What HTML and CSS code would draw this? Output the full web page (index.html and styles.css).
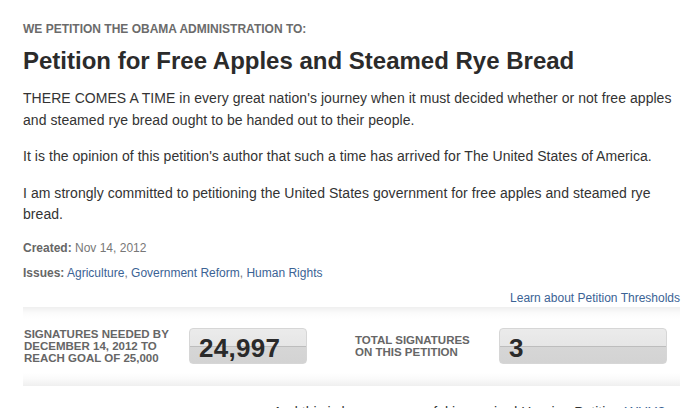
FILE: index.html
```html
<!DOCTYPE html>
<html>
<head>
<meta charset="utf-8">
<link rel="stylesheet" href="styles.css">
</head>
<body>
<div class="page">
  <div class="kicker">WE PETITION THE OBAMA ADMINISTRATION TO:</div>
  <h1 class="title">Petition for Free Apples and Steamed Rye Bread</h1>
  <div class="body">
    <p>THERE COMES A TIME in every great nation's journey when it must decided whether or not free apples and steamed rye bread ought to be handed out to their people.</p>
    <p>It is the opinion of this petition's author that such a time has arrived for The United States of America.</p>
    <p>I am strongly committed to petitioning the United States government for free apples and steamed rye bread.</p>
  </div>
  <div class="meta"><b>Created:</b> Nov 14, 2012</div>
  <div class="meta issues"><b>Issues:</b> <a href="#">Agriculture</a>, <a href="#">Government Reform</a>, <a href="#">Human Rights</a></div>
  <div class="learn"><a href="#">Learn about Petition Thresholds</a></div>
  <div class="sigbox">
    <div class="sig sig-needed">
      <div class="sig-label">SIGNATURES NEEDED BY<br>DECEMBER 14, 2012 TO<br>REACH GOAL OF 25,000</div>
      <div class="counter counter-needed">24,997</div>
    </div>
    <div class="sig sig-total">
      <div class="sig-label">TOTAL SIGNATURES<br>ON THIS PETITION</div>
      <div class="counter counter-total">3</div>
    </div>
  </div>
  <div class="footer-line">And this is how a successful is required Hearing Petition <a href="#">WHY?</a></div>
</div>
</body>
</html>
```
FILE: styles.css
```css
html, body {
  margin: 0;
  padding: 0;
  background: #fff;
  overflow: hidden;
}
body {
  font-family: "Liberation Sans", Arial, sans-serif;
  color: #333;
}
a {
  color: #3b6395;
  text-decoration: none;
}
.page {
  width: 657px;
  padding: 22px 0 0 23px;
}
.kicker {
  font-size: 12px;
  font-weight: bold;
  color: #6b6b6b;
  line-height: 14px;
}
.title {
  margin: 11px 0 0;
  font-size: 24px;
  line-height: 28px;
  font-weight: bold;
  color: #2b2b2b;
}
.body {
  margin-top: 13px;
  font-size: 14px;
  line-height: 21.5px;
  color: #333;
  letter-spacing: 0.05px;
}
.body p {
  margin: 0 0 15px;
}
.meta {
  font-size: 12px;
  line-height: 14px;
  color: #777;
  margin-top: 14px;
}
.meta b {
  color: #666;
}
.issues {
  margin-top: 11px;
}
.learn {
  margin-top: 11px;
  text-align: right;
  font-size: 12px;
  line-height: 14px;
}
.sigbox {
  margin-top: 2px;
  height: 79px;
  display: flex;
  align-items: center;
  background: linear-gradient(to bottom, #efefef 0px, #fbfbfb 6px, #fff 12px, #fff 66px, #fafafa 72px, #efefef 79px);
}
.sig {
  display: flex;
  align-items: center;
}
.sig-needed {
  width: 332px;
}
.sig-label {
  font-size: 11.5px;
  line-height: 12px;
  font-weight: bold;
  color: #666;
}
.sig-needed .sig-label {
  width: 165px;
  padding-left: 1px;
}
.sig-total .sig-label {
  width: 144px;
}
.counter {
  height: 36px;
  box-sizing: border-box;
  border: 1px solid #d6d6d6;
  border-radius: 4px;
  background: linear-gradient(to bottom, #ebebeb 0, #e6e6e6 50%, #bdbdbd 50%, #bdbdbd calc(50% + 1px), #d6d6d6 calc(50% + 1px), #d3d3d3 100%);
  font-size: 26px;
  font-weight: bold;
  line-height: 38px;
  color: #2a2a2a;
  letter-spacing: 0.3px;
  padding-left: 9px;
}
.counter-needed {
  width: 118px;
}
.counter-total {
  width: 168px;
}
.footer-line {
  margin-top: 17px;
  padding-left: 250px;
  font-size: 14px;
  line-height: 18px;
  color: #333;
  white-space: nowrap;
}
```
